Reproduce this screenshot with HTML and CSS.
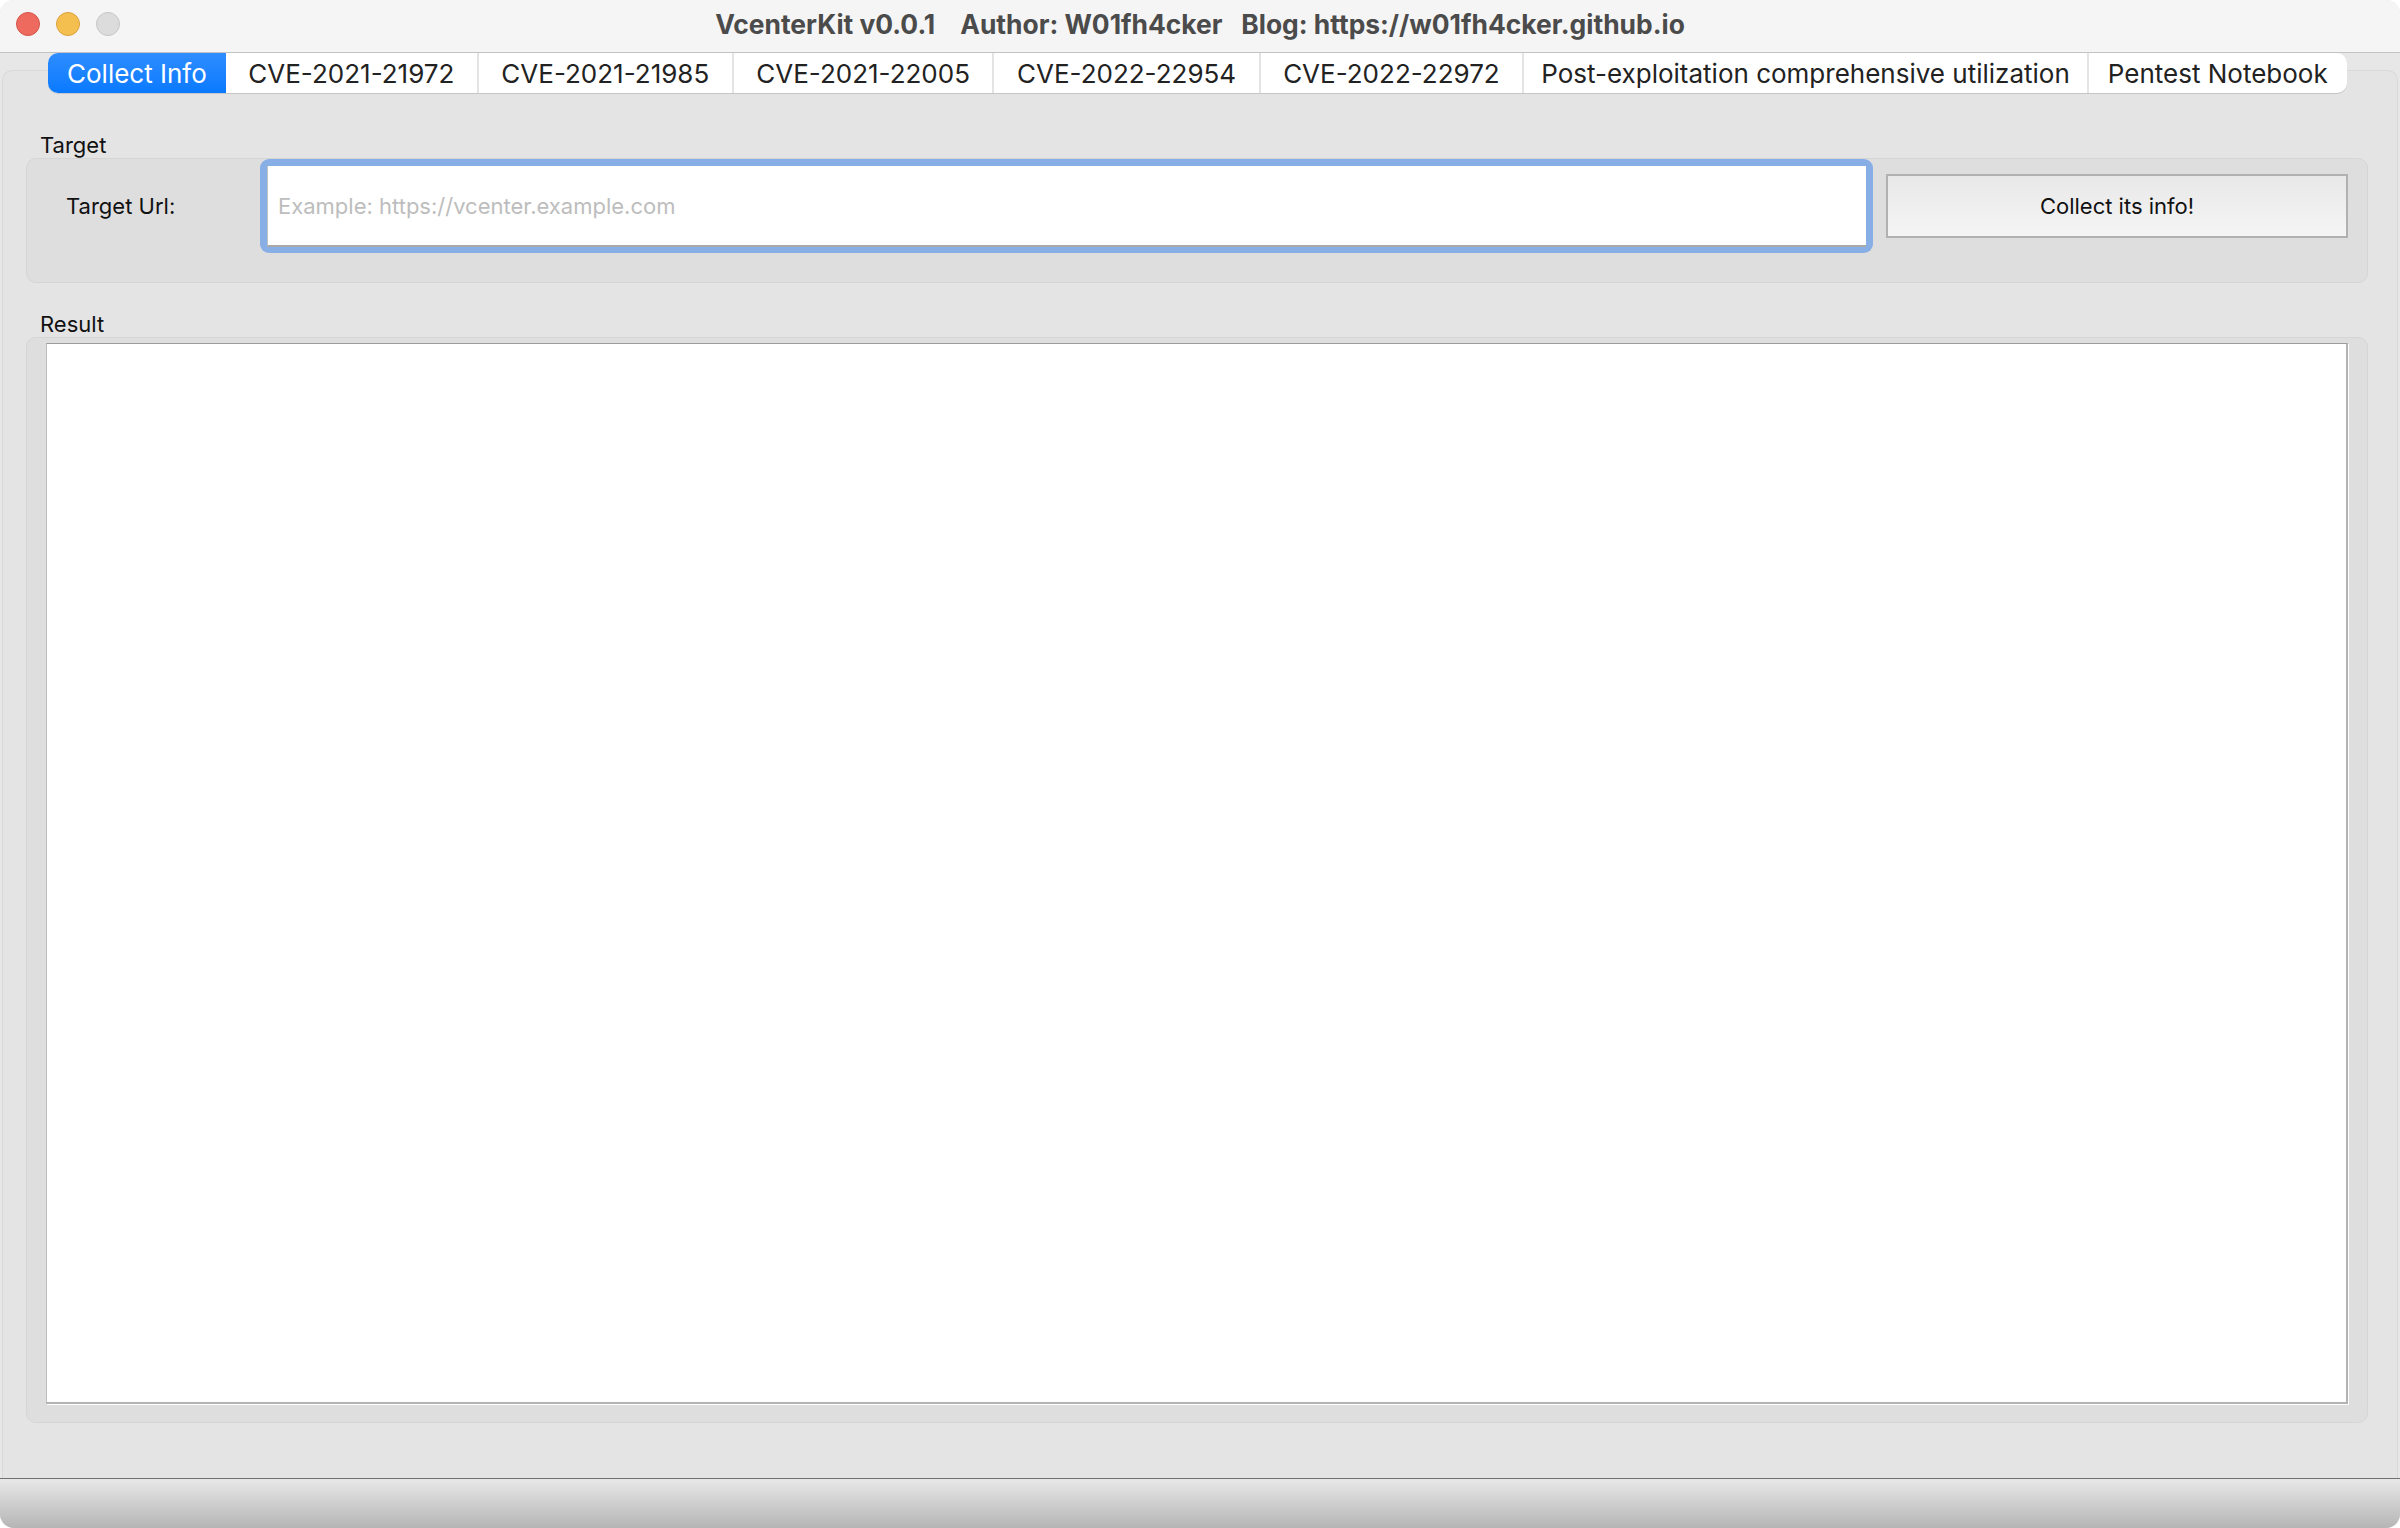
FILE: index.html
```html
<!DOCTYPE html>
<html>
<head>
  <meta charset="UTF-8">
  <meta name="viewport" content="width=device-width, initial-scale=1.0">
  <title>VcenterKit v0.0.1</title>
  <link rel="stylesheet" href="styles.css">
</head>
<body>
  <div class="window">
    <div class="titlebar">
      <div class="lights">
        <span class="light close"></span>
        <span class="light minimize"></span>
        <span class="light zoom"></span>
      </div>
      <div class="title">VcenterKit v0.0.1    Author: W01fh4cker   Blog: https://w01fh4cker.github.io</div>
      <div></div>
    </div>

    <div class="main">
      <div class="tabs">
        <div class="tab active">Collect Info</div>
        <div class="tab cve">CVE-2021-21972</div>
        <div class="tab cve">CVE-2021-21985</div>
        <div class="tab cve">CVE-2021-22005</div>
        <div class="tab cve">CVE-2022-22954</div>
        <div class="tab cve">CVE-2022-22972</div>
        <div class="tab post">Post-exploitation comprehensive utilization</div>
        <div class="tab">Pentest Notebook</div>
      </div>

      <div class="pane">
        <div class="group-label">Target</div>
        <div class="group target-box">
          <label for="url" class="field-label">Target Url:</label>
          <div class="url-field">
            <input type="text" id="url" placeholder="Example: https://vcenter.example.com">
          </div>
          <button class="collect-button">Collect its info!</button>
        </div>

        <div class="group-label result-label">Result</div>
        <div class="group result-box">
          <textarea id="result"></textarea>
        </div>
      </div>
    </div>

    <div class="statusbar"></div>
  </div>
</body>
</html>
```

FILE: styles.css
```css
body {
  margin: 0;
  padding: 0;
  background-color: #ffffff;
  font-family: Inter, "Noto Sans", sans-serif;
}

.window {
  width: 2400px;
  height: 1528px;
  display: flex;
  flex-direction: column;
  background-color: #e7e7e7;
  border-radius: 14px;
  overflow: hidden;
}

/* title bar */

.titlebar {
  height: 53px;
  box-sizing: border-box;
  padding-bottom: 5px;
  display: grid;
  grid-template-columns: 1fr auto 1fr;
  align-items: center;
  background-color: #f5f5f5;
  border-bottom: 1px solid #c3c3c3;
}

.lights {
  display: flex;
  gap: 16px;
  padding-left: 16px;
}

.light {
  width: 24px;
  height: 24px;
  box-sizing: border-box;
  border-radius: 50%;
  border: 1px solid transparent;
}

.light.close {
  background-color: #ee6a5f;
  border-color: #d45448;
}

.light.minimize {
  background-color: #f5bf4f;
  border-color: #d9a13f;
}

.light.zoom {
  background-color: #dcdcdc;
  border-color: #c6c6c6;
}

.title {
  white-space: pre;
  font-size: 26.4px;
  font-weight: bold;
  color: #4b4b4b;
}

/* tabs */

.main {
  flex: 1;
  display: flex;
  flex-direction: column;
}

.tabs {
  position: relative;
  z-index: 1;
  align-self: flex-start;
  display: flex;
  height: 40px;
  margin-left: 48px;
  margin-bottom: -23px;
  background-color: #ffffff;
  border-radius: 10px;
  box-shadow: 0 1px 0 #c6c6c6;
}

.tab {
  display: flex;
  align-items: center;
  padding: 0 19px;
  font-size: 26px;
  color: #222222;
  border-left: 2px solid #e4e4e4;
}

.tab.cve {
  padding: 0 22.5px;
}

.tab.post {
  padding: 0 17px;
}

.tab:first-child {
  border-left: none;
}

.tab.active {
  color: #ffffff;
  background: linear-gradient(#2f8dff, #0a79ff);
  border-radius: 10px 0 0 10px;
}

.tab.active + .tab {
  border-left: none;
}

/* pane */

.pane {
  flex: 1;
  display: flex;
  flex-direction: column;
  margin: 0 2px;
  padding: 62px 29px 55px 23px;
  background-color: #e4e4e4;
  border: 1px solid #d9d9d9;
  border-bottom: none;
  border-radius: 10px 10px 0 0;
}

.group-label {
  height: 24px;
  line-height: 24px;
  margin-bottom: 1px;
  padding-left: 14px;
  font-size: 22px;
  color: #111111;
}

.result-label {
  margin-top: 29px;
}

.group {
  background-color: #dedede;
  border: 1px solid #d5d5d5;
  border-radius: 10px;
}

.target-box {
  display: flex;
  align-items: center;
  padding: 0 19px 29px 39px;
}

.field-label {
  flex: none;
  width: 194px;
  font-size: 22px;
  color: #111111;
}

.url-field {
  flex: 1;
  padding: 7px 7px 6px;
  background-color: #88aee6;
  border-radius: 9px;
}

.url-field input {
  display: block;
  width: 100%;
  height: 81px;
  box-sizing: border-box;
  padding: 0 10px;
  border: none;
  border-left: 1px solid #c2c2c2;
  border-bottom: 2px solid #a9a9a9;
  background-color: #ffffff;
  font-family: Inter, "Noto Sans", sans-serif;
  font-size: 22px;
  color: #111111;
  outline: none;
}

.url-field input::placeholder {
  color: #bdbdbd;
}

.collect-button {
  flex: none;
  width: 462px;
  height: 64px;
  margin-left: 13px;
  background: linear-gradient(#e8e8e8, #f5f5f5);
  border: 2px solid #b1b1b1;
  font-family: Inter, "Noto Sans", sans-serif;
  font-size: 22px;
  color: #111111;
  cursor: pointer;
}

.result-box {
  flex: 1;
  display: flex;
  flex-direction: column;
  padding: 5px 19px 18px;
}

.result-box textarea {
  flex: 1;
  resize: none;
  margin: 0;
  background-color: #ffffff;
  border: 1px solid #bdbdbd;
  border-top-color: #9c9c9c;
  border-right: 2px solid #b3b3b3;
  border-bottom: 2px solid #b3b3b3;
  box-shadow: 1px 1px 0 #ffffff;
  outline: none;
}

/* bottom bar */

.statusbar {
  height: 50px;
  box-sizing: border-box;
  border-top: 1px solid #707070;
  background: linear-gradient(#e8e8e8, #b5b5b5);
}
```
